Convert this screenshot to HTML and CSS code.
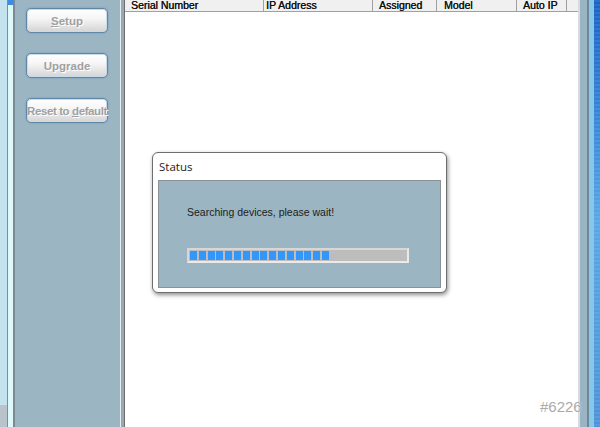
FILE: index.html
```html
<!DOCTYPE html>
<html lang="en">
<head>
    <meta charset="UTF-8">
    <title>Device Search</title>
    <link rel="stylesheet" href="styles.css">
</head>
<body>
    <div class="screen">
        <div class="desk-left"></div>
        <div class="frame-left"></div>

        <div class="sidebar">
            <button class="btn" disabled><span><u>S</u>etup</span></button>
            <button class="btn" disabled><span>Up<u>g</u>rade</span></button>
            <button class="btn btn-wide" disabled><span>Reset to <u>d</u>efault</span></button>
        </div>
        <div class="splitter"></div>

        <div class="list">
            <div class="list-head">
                <div class="col col-serial">Serial Number</div>
                <div class="col col-ip">IP Address</div>
                <div class="col col-assigned">Assigned</div>
                <div class="col col-model">Model</div>
                <div class="col col-auto">Auto IP</div>
            </div>
        </div>

        <div class="frame-right"></div>
        <div class="desk-right"></div>
    </div>

    <!-- status popup -->
    <div class="dialog">
        <div class="dialog-title">Status</div>
        <div class="dialog-body">
            <p class="dialog-msg">Searching devices, please wait!</p>
            <div class="progress">
                <div class="progress-fill">
                    <span></span><span></span><span></span><span></span>
                    <span></span><span></span><span></span><span></span>
                    <span></span><span></span><span></span><span></span>
                    <span></span><span></span><span></span><span></span>
                </div>
            </div>
        </div>
    </div>

    <div class="watermark">#6226</div>
</body>
</html>
```

FILE: styles.css
```css
body {
    margin: 0;
    padding: 0;
    width: 600px;
    height: 427px;
    overflow: hidden;
    font-family: "Liberation Sans", Arial, sans-serif;
    background-color: #fff;
    position: relative;
}

.screen {
    display: flex;
    height: 427px;
}

.desk-left {
    width: 7px;
    background: linear-gradient(to bottom, #c3e2ee 0, #c3e2ee 405px, #b9c4ca 405px);
    background-color: #c3e2ee;
}
.frame-left {
    width: 5px;
    border-left: 1px solid #7f8c90;
    border-right: 2px solid #7b8a92;
    background: linear-gradient(to bottom, #3a8de0 0, #3a8de0 5px, #dff9fb 5px);
}

.sidebar {
    width: 105px;
    background-color: #9cb5c3;
    display: flex;
    flex-direction: column;
    align-items: flex-start;
    gap: 20px;
    padding: 8px 0 0 11px;
    box-sizing: border-box;
}
.btn {
    width: 82px;
    height: 25px;
    padding: 0;
    border: 1px solid #5f87a8;
    border-radius: 5px;
    background: linear-gradient(to bottom, #ffffff 0%, #f6f6f6 40%, #d4d4d4 100%);
    box-shadow: inset 0 0 0 1px #c9dae8, 0 0 2px #6f95b5;
    font-family: "Liberation Sans", Arial, sans-serif;
    font-weight: bold;
    font-size: 11.5px;
    color: #a0a0a0;
    text-shadow: 1px 1px 0 #fff;
    white-space: nowrap;
    overflow: visible;
    display: flex;
    justify-content: center;
    align-items: center;
}
.btn-wide {
    font-size: 11.5px;
    letter-spacing: -0.4px;
}

.splitter {
    width: 5px;
    border-left: 1px solid #e6eef2;
    border-right: 1px solid #6b6f72;
    background-color: #9aa7ae;
    box-sizing: border-box;
}

.list {
    width: 453px;
    background-color: #fff;
    border-right: 2px solid #d9dcde;
}
.list-head {
    display: flex;
    height: 11px;
    background-color: #f0f0f0;
    border-bottom: 1px solid #a0a0a0;
    font-size: 10.5px;
    line-height: 11px;
    color: #111;
    text-shadow: 0.3px 0 0 #111;
}
.col {
    height: 11px;
    border-right: 1px solid #a0a0a0;
    padding-left: 6px;
    box-sizing: border-box;
    white-space: nowrap;
}
.col-serial { width: 139px; }
.col-ip { width: 109px; padding-left: 2px; }
.col-assigned { width: 64px; }
.col-model { width: 80px; padding-left: 7px; }
.col-auto { width: 50px; }

.frame-right {
    width: 7px;
    background-color: #9ab4c4;
    border-right: 2px solid #6f8797;
}
.desk-right {
    flex: 1;
    border-left: 5px solid #86c8ea;
    background: repeating-linear-gradient(to bottom, rgba(255, 255, 255, 0.08) 0, rgba(255, 255, 255, 0.08) 2px, transparent 2px, transparent 4px),
        linear-gradient(to bottom, #1c62c4 0, #3a86d8 120px, #5aa6e6 220px, #4e92d8 427px);
}

.dialog {
    position: absolute;
    left: 152px;
    top: 152px;
    width: 295px;
    height: 141px;
    box-sizing: border-box;
    background-color: #fff;
    border: 1px solid #6e6e6e;
    border-radius: 6px;
    box-shadow: 1px 2px 4px rgba(0, 0, 0, 0.45);
    padding: 0 5px 4px 5px;
    display: flex;
    flex-direction: column;
}
.dialog-title {
    font-family: "Open Sans", "Noto Sans", sans-serif;
    font-size: 11.5px;
    color: #222;
    height: 27px;
    line-height: 27px;
    padding-left: 1px;
}
.dialog-body {
    flex: 1;
    background-color: #9cb5c3;
    border: 1px solid #8a9297;
    padding: 0 0 0 28px;
}
.dialog-msg {
    margin: 25px 0 0 0;
    font-size: 10.5px;
    line-height: 12px;
    color: #1c1c1c;
}
.progress {
    margin-top: 30px;
    width: 222px;
    height: 15px;
    box-sizing: border-box;
    background-color: #bdbdbd;
    border: 2px solid #d7d7d7;
    border-right-color: #eaeaea;
    border-bottom-color: #eaeaea;
    padding: 1px 0 1px 1px;
}
.progress-fill {
    display: flex;
    gap: 1.8px;
    height: 100%;
}
.progress-fill span {
    width: 7px;
    background-color: #3396fb;
}

.watermark {
    position: absolute;
    left: 540px;
    top: 398px;
    font-family: "Liberation Sans", Arial, sans-serif;
    font-size: 15px;
    color: #aaa;
    text-shadow: 0 0 1px #fff;
}
```
